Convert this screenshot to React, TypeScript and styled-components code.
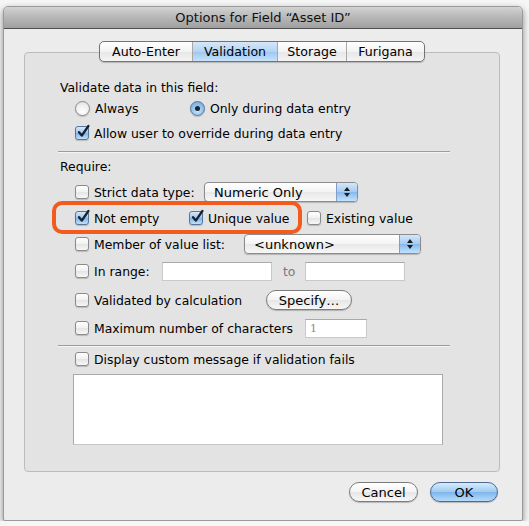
import styled, { createGlobalStyle } from 'styled-components'

const GlobalStyle = createGlobalStyle`
  html, body {
    margin: 0;
    padding: 0;
    background: #f6f6f6;
  }
  body {
    font-family: "DejaVu Sans", "Liberation Sans", sans-serif;
    font-size: 12.4px;
    color: #000;
  }
`

function CheckMark() {
  return (
    <CheckSvg viewBox="0 0 14 14" width="14" height="14">
      <path d="M3 7.2 L5.8 10.6 L12.4 1" fill="none" stroke="#1a2230" strokeWidth="2.3" strokeLinecap="round" strokeLinejoin="round" />
    </CheckSvg>
  )
}

function Checkbox({ checked, label }: { checked?: boolean; label: string }) {
  return (
    <Check>
      <Box $checked={checked}>{checked && <CheckMark />}</Box>
      <span>{label}</span>
    </Check>
  )
}

function Radio({ selected, label }: { selected?: boolean; label: string }) {
  return (
    <Check>
      <Round $selected={selected}>{selected && <Dot />}</Round>
      <span>{label}</span>
    </Check>
  )
}

function Popup({ value, width }: { value: string; width: number }) {
  return (
    <PopupButton style={{ width }}>
      <PopupValue>{value}</PopupValue>
      <PopupArrows>
        <svg viewBox="0 0 8 12" width="8" height="12">
          <path d="M4 1 L7 5 L1 5 Z M4 11 L7 7 L1 7 Z" fill="#1b1b1b" />
        </svg>
      </PopupArrows>
    </PopupButton>
  )
}

export default function App() {
  return (
    <>
      <GlobalStyle />
      <Window>
        <TitleBar>Options for Field “Asset ID”</TitleBar>
        <Body>
          <TabBar>
            <Tab $w={92}>Auto-Enter</Tab>
            <Tab $w={85} $active>Validation</Tab>
            <Tab $w={69}>Storage</Tab>
            <Tab $w={78}>Furigana</Tab>
          </TabBar>

          <Group>
            <Heading $top={0}>Validate data in this field:</Heading>
            <Row $top={2}>
              <Cell $w={115}><Radio label="Always" /></Cell>
              <Radio selected label="Only during data entry" />
            </Row>
            <Row $top={5}>
              <Checkbox checked label="Allow user to override during data entry" />
            </Row>
            <Separator $top={8} />

            <Heading $top={7}>Require:</Heading>
            <Row $top={7}>
              <Cell $w={129}><Checkbox label="Strict data type:" /></Cell>
              <Popup value="Numeric Only" width={154} />
            </Row>
            <Row $top={6}>
              <Highlight />
              <Cell $w={114}><Checkbox checked label="Not empty" /></Cell>
              <Cell $w={118}><Checkbox checked label="Unique value" /></Cell>
              <Checkbox label="Existing value" />
            </Row>
            <Row $top={6}>
              <Cell $w={169}><Checkbox label="Member of value list:" /></Cell>
              <Popup value="<unknown>" width={177} />
            </Row>
            <Row $top={7}>
              <Cell $w={87}><Checkbox label="In range:" /></Cell>
              <Field $w={110} />
              <ToLabel>to</ToLabel>
              <Field $w={100} />
            </Row>
            <Row $top={9}>
              <Cell $w={191}><Checkbox label="Validated by calculation" /></Cell>
              <PillButton $w={86}>Specify…</PillButton>
            </Row>
            <Row $top={8}>
              <Cell $w={230}><Checkbox label="Maximum number of characters" /></Cell>
              <Field $w={62}>1</Field>
            </Row>
            <Separator $top={7} />

            <Row $top={3}>
              <Checkbox label="Display custom message if validation fails" />
            </Row>
            <MessageArea />
          </Group>

          <Footer>
            <PillButton $w={69}>Cancel</PillButton>
            <PillButton $w={68} $primary>OK</PillButton>
          </Footer>
        </Body>
      </Window>
    </>
  )
}

const Window = styled.div`
  width: 520px;
  height: 515px;
  margin: 6px 0 0 3px;
  box-sizing: border-box;
  background: #ececec;
  border: 1px solid #9a9a9a;
  border-radius: 5px 5px 2px 2px;
  box-shadow: 0 3px 7px rgba(0, 0, 0, 0.45);
  display: flex;
  flex-direction: column;
  overflow: hidden;
`

const TitleBar = styled.div`
  height: 21px;
  flex: none;
  display: flex;
  align-items: center;
  justify-content: center;
  font-size: 13px;
  color: #111;
  background: linear-gradient(#d2d2d2, #b4b4b4 55%, #a0a0a0);
  border-bottom: 1px solid #4f4f4f;
`

const Body = styled.div`
  flex: 1;
  display: flex;
  flex-direction: column;
  padding: 12px 22px 0 20px;
`

const TabBar = styled.div`
  align-self: center;
  display: flex;
  height: 21px;
  box-sizing: border-box;
  margin: 0 0 -10px 0;
  border: 1px solid #747474;
  border-radius: 5px;
  overflow: hidden;
  background: linear-gradient(#ffffff, #f3f3f3 50%, #e6e6e6 51%, #f5f5f5);
  box-shadow: 0 1px 1px rgba(0, 0, 0, 0.2);
  position: relative;
  z-index: 1;
`

const Tab = styled.div<{ $w: number; $active?: boolean }>`
  width: ${p => p.$w}px;
  box-sizing: border-box;
  display: flex;
  align-items: center;
  justify-content: center;
  font-size: 12.6px;
  border-left: 1px solid #a8a8a8;
  background: ${p => (p.$active ? 'linear-gradient(#d5e7f9, #b4d4f3 50%, #9cc6f0 51%, #c7e2fb)' : 'transparent')};

  &:first-child {
    border-left: none;
  }
`

const Group = styled.div`
  width: 476px;
  height: 420px;
  box-sizing: border-box;
  background: #e3e3e3;
  border: 1px solid #bcbcbc;
  border-radius: 4px;
  padding: 27px 49px 0 33px;
  display: flex;
  flex-direction: column;
`

const Heading = styled.div<{ $top: number }>`
  height: 16px;
  line-height: 16px;
  margin: ${p => p.$top}px 0 0 2px;
`

const Row = styled.div<{ $top: number }>`
  position: relative;
  height: 20px;
  margin: ${p => p.$top}px 0 0 17px;
  display: flex;
  align-items: center;
`

const Cell = styled.div<{ $w: number }>`
  width: ${p => p.$w}px;
  flex: none;
  display: flex;
  align-items: center;
`

const Separator = styled.div<{ $top: number }>`
  height: 1px;
  flex: none;
  margin-top: ${p => p.$top}px;
  background: #9d9d9d;
  box-shadow: 0 1px 0 #f4f4f4;
`

const Check = styled.label`
  display: flex;
  align-items: center;
  gap: 5px;
  white-space: nowrap;
`

const Box = styled.span<{ $checked?: boolean }>`
  position: relative;
  width: 14px;
  height: 14px;
  flex: none;
  box-sizing: border-box;
  border: 1px solid ${p => (p.$checked ? '#55779c' : '#8a8a8a')};
  border-radius: 3px;
  background: ${p =>
    p.$checked
      ? 'linear-gradient(#d6e8fa, #9cc5ee 50%, #7fb4e8 51%, #bfe0fb)'
      : 'linear-gradient(#ffffff, #f1f1f1 50%, #e4e4e4 51%, #f7f7f7)'};
  box-shadow: 0 1px 1px rgba(0, 0, 0, 0.18);
`

const CheckSvg = styled.svg`
  position: absolute;
  left: 0;
  top: -2px;
  overflow: visible;
`

const Round = styled.span<{ $selected?: boolean }>`
  width: 15px;
  height: 15px;
  flex: none;
  box-sizing: border-box;
  border-radius: 50%;
  border: 1px solid ${p => (p.$selected ? '#55779c' : '#8a8a8a')};
  background: ${p =>
    p.$selected
      ? 'radial-gradient(circle at 50% 70%, #c4e2fc, #8bbbea 60%, #6fa4dc)'
      : 'radial-gradient(circle at 50% 75%, #ffffff, #f0f0f0 55%, #d9d9d9)'};
  box-shadow: 0 1px 1px rgba(0, 0, 0, 0.18);
  display: flex;
  align-items: center;
  justify-content: center;
`

const Dot = styled.span`
  width: 5px;
  height: 5px;
  border-radius: 50%;
  background: #1b2430;
`

const Highlight = styled.div`
  position: absolute;
  left: -23px;
  top: -7px;
  width: 250px;
  height: 33px;
  box-sizing: border-box;
  border: 4px solid #f25a1e;
  border-radius: 10px;
  pointer-events: none;
`

const PopupButton = styled.div`
  height: 20px;
  box-sizing: border-box;
  flex: none;
  display: flex;
  border: 1px solid #8c8c8c;
  border-radius: 4px;
  overflow: hidden;
  background: linear-gradient(#ffffff, #f4f4f4 50%, #e8e8e8 51%, #f7f7f7);
  box-shadow: 0 1px 1px rgba(0, 0, 0, 0.2);
`

const PopupValue = styled.div`
  flex: 1;
  display: flex;
  align-items: center;
  padding-left: 9px;
  font-size: 13px;
`

const PopupArrows = styled.div`
  width: 20px;
  display: flex;
  align-items: center;
  justify-content: center;
  border-left: 1px solid #7f9ec2;
  background: linear-gradient(#d3e7fb, #a5cbf1 50%, #86b8eb 51%, #c3e2fd);
`

const Field = styled.div<{ $w: number }>`
  width: ${p => p.$w}px;
  height: 19px;
  flex: none;
  box-sizing: border-box;
  background: #fff;
  border: 1px solid #c9c9c9;
  border-top-color: #a9a9a9;
  padding: 2px 0 0 4px;
  font-family: "DejaVu Serif", "Liberation Serif", serif;
  font-size: 11px;
  color: #8a8a8a;
`

const ToLabel = styled.span`
  margin: 0 10px 0 11px;
  color: #7a7a7a;
`

const PillButton = styled.div<{ $w: number; $primary?: boolean }>`
  width: ${p => p.$w}px;
  height: 20px;
  flex: none;
  box-sizing: border-box;
  display: flex;
  align-items: center;
  justify-content: center;
  border-radius: 10px;
  border: 1px solid ${p => (p.$primary ? '#4e6a93' : '#7c7c7c')};
  background: ${p =>
    p.$primary
      ? 'linear-gradient(#d6ebfd, #9fcaf2 50%, #7db5ea 51%, #b7dcfb)'
      : 'linear-gradient(#ffffff, #f3f3f3 50%, #e6e6e6 51%, #f7f7f7)'};
  box-shadow: 0 1px 1px rgba(0, 0, 0, 0.22);
  font-size: 13px;
`

const MessageArea = styled.div`
  margin: 5px 0 0 15px;
  width: 370px;
  height: 71px;
  box-sizing: border-box;
  background: #fff;
  border: 1px solid #a9a9a9;
  border-bottom-color: #c6c6c6;
`

const Footer = styled.div`
  display: flex;
  justify-content: flex-end;
  gap: 12px;
  margin: 10px 2px 0 0;
`
